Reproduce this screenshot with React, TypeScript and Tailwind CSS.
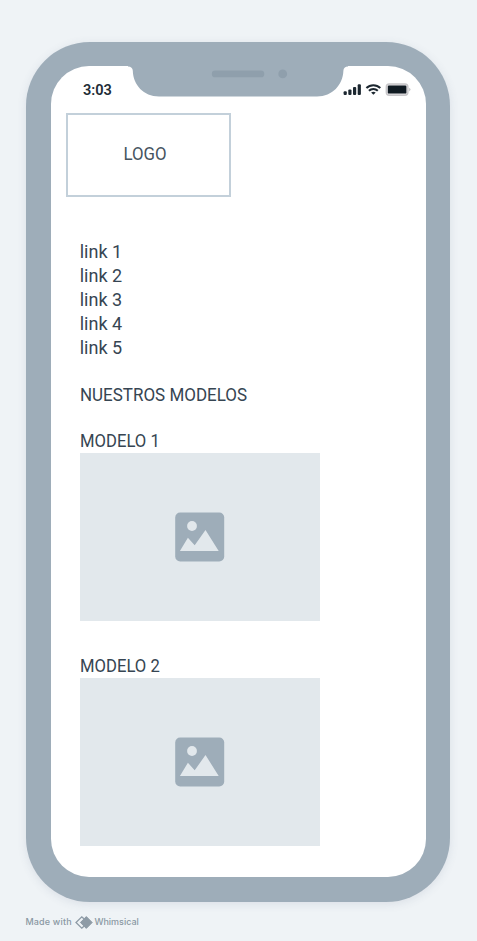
const din = "font-['Roboto','DejaVu_Sans',sans-serif]";

const links = ['link 1', 'link 2', 'link 3', 'link 4', 'link 5'];

function Notch() {
  return (
    <svg className="absolute left-[77px] top-[-1px] h-[32px] w-[220px]" viewBox="0 0 220 32" aria-hidden="true">
      <path
        d="M0 0H220V1.5C217 1.6 215.5 3 215.4 5.800C214.8 20 204.5 31.500 189 31.500H31C15.500 31.500 5.200 20 4.800 5.800C4.700 3 3 1.6 0 1.5Z"
        fill="#9eadb9"
      />
      <rect x="83.800" y="5.500" width="52.500" height="6.800" rx="3.400" fill="#8f9fac" />
      <circle cx="154.700" cy="8.900" r="4.400" fill="#8f9fac" />
    </svg>
  );
}

function StatusIcons() {
  return (
    <svg className="relative mr-[15px] mt-[17px] h-[14px] w-[69px]" viewBox="0 0 69 14" aria-hidden="true">
      <g fill="#1c2730">
        <rect x="1.600" y="8.300" width="3.200" height="3.700" rx="1" />
        <rect x="6.300" y="6.500" width="3.200" height="5.500" rx="1" />
        <rect x="11" y="4" width="3.200" height="8" rx="1" />
        <rect x="15.700" y="1.300" width="3.200" height="10.700" rx="1" />
      </g>
      <g fill="none" stroke="#1c2730" strokeWidth="2">
        <path d="M24.400 5C28.300 1.200 34.400 1.200 38.300 5" />
        <path d="M26.900 7.800C29.400 5.400 33.300 5.400 35.800 7.800" />
      </g>
      <path d="M29.100 9.500Q31.400 8.100 33.700 9.500L31.400 11.700Z" fill="#1c2730" />
      <rect x="44.300" y="1" width="21.600" height="11.200" rx="3" fill="#e4e3e5" stroke="#c7c6c9" strokeWidth="1.400" />
      <rect x="45.800" y="2.600" width="18.600" height="8" rx="1.200" fill="#101a22" />
      <path d="M67.100 4.700Q68.500 5.400 68.500 6.600T67.100 8.500Z" fill="#c7c6c9" />
    </svg>
  );
}

function Picture() {
  return (
    <div className="flex h-[168px] w-[240px] items-center justify-center bg-[#e2e8ec]">
      <svg className="h-[50px] w-[50px]" viewBox="0 0 50 50" aria-hidden="true">
        <rect x=".2" y=".5" width="49" height="49" rx="5" fill="#9eadb9" />
        <circle cx="17" cy="14" r="4.900" fill="#e2e8ec" />
        <path d="M4.900 39L12.900 25.800L19.700 33.300L30.500 18L43.700 39Z" fill="#e2e8ec" />
      </svg>
    </div>
  );
}

function Model({ name }: { name: string }) {
  return (
    <section className="flex h-[225px] flex-col">
      <h3 className="h-[24px] origin-left scale-x-[0.925] text-[18px] leading-[24px]">{name}</h3>
      <Picture />
    </section>
  );
}

export default function App() {
  return (
    <div className={`h-[941px] w-[477px] overflow-hidden bg-[#eff3f6] pl-[26.400px] pt-[42px] text-[#364552] ${din}`}>
      <div className="h-[859.500px] w-[424px] rounded-[64px] bg-[#9eadb9] p-[24.300px] shadow-[0_2px_10px_rgba(70,90,120,0.12)]">
        <main className="flex h-full flex-col rounded-[38px] bg-white">
          <header className="relative flex h-[46.300px] shrink-0 justify-between">
            <Notch />
            <time className="ml-[32.500px] mt-[14px] h-[20px] origin-left scale-x-[0.97] text-[15px] font-semibold leading-[20px] text-[#222d37]">3:03</time>
            <StatusIcons />
          </header>
          <div className="ml-[15px] flex h-[84.500px] w-[165.500px] shrink-0 items-center justify-center border-2 border-[#c3d0da] pb-[2px] pr-[7px] text-[18px] text-[#46545f]">
            <span className="scale-x-[0.935]">LOGO</span>
          </div>
          <div className="ml-[29px] flex flex-col pt-[42.900px] text-[18px]">
            <nav className="flex flex-col">
              {links.map((label) => (
                <a key={label} className="h-[24px] leading-[24px]">{label}</a>
              ))}
            </nav>
            <h2 className="mt-[23px] h-[24px] origin-left scale-x-[0.943] leading-[24px]">NUESTROS MODELOS</h2>
            <div className="pt-[22px]">
              <Model name="MODELO 1" />
              <Model name="MODELO 2" />
            </div>
          </div>
        </main>
      </div>
      <footer className="-ml-[1px] mt-[12.500px] flex h-[16px] items-center font-['Inter',sans-serif] text-[9px] font-medium text-[#8a98a3]">
        <span className="w-[46.500px] whitespace-nowrap tracking-[0.02em]">Made with</span>
        <svg className="ml-[3px] mr-[1.500px] h-[13px] w-[18px]" viewBox="0 0 18 13" aria-hidden="true">
          <path d="M9 2.800L6.800.9L1 6.500L6.800 12.100L9 10.200" fill="none" stroke="#8e9ba6" strokeWidth="1.300" />
          <path d="M11.300.6L17.200 6.500L11.300 12.400L5.400 6.500Z" fill="#8e9ba6" stroke="#8e9ba6" strokeWidth="1" strokeLinejoin="round" />
        </svg>
        <span>Whimsical</span>
      </footer>
    </div>
  );
}
